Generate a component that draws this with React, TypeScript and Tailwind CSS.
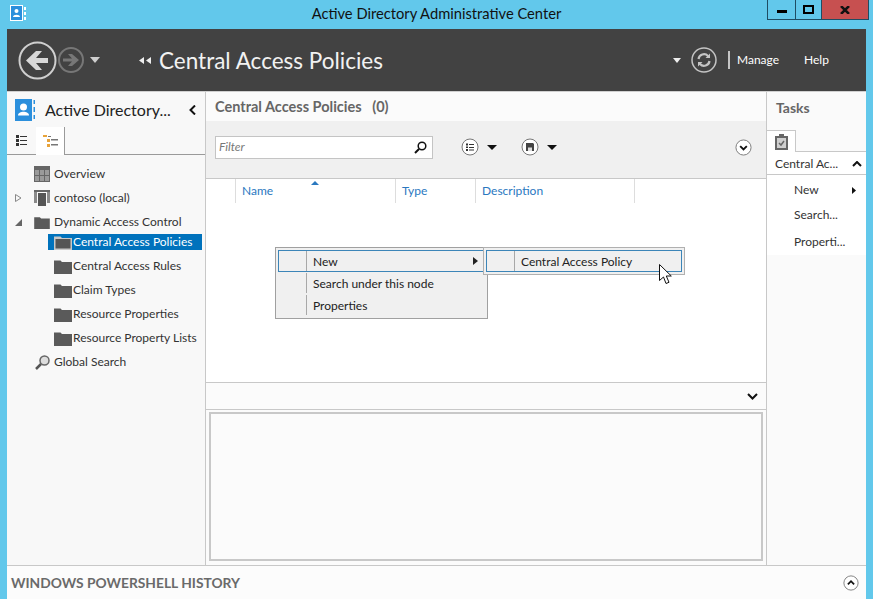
const FONT = "font-['Lato','Open_Sans',sans-serif]";

function FolderIcon({ open = false, small = false }: { open?: boolean; small?: boolean }) {
  return (
    <svg width={small ? 16 : 18} height={small ? 13 : 15} viewBox="0 0 18 15" className="shrink-0">
      <path d="M0 3V1.500h6.500L8 3h10v12H0z" fill={open ? "#c8c8c8" : "#5a5a5a"} />
      {open && <rect x="1.500" y="4" width="15" height="9.500" fill="#555" />}
    </svg>
  );
}

function TreeRow({
  label,
  icon,
  expander,
}: {
  label: string;
  icon: React.ReactNode;
  expander?: React.ReactNode;
}) {
  return (
    <div className="flex h-6 items-center pl-[7px] text-[12px] text-[#333]">
      <div className="flex w-[8px] items-center justify-center">{expander}</div>
      <div className="ml-[10px] flex w-[20px] justify-center">{icon}</div>
      <span className="ml-[2px]">{label}</span>
    </div>
  );
}

function SubRow({ label, selected = false }: { label: string; selected?: boolean }) {
  return (
    <div className={`flex h-6 items-center pl-[41px] text-[12px] text-[#333] ${selected ? "-mt-[4px]" : ""}`}>
      <div
        className={`flex h-4 w-[154px] items-center pl-[6px] ${selected ? "bg-[#0072bc] text-white" : ""}`}
      >
        <FolderIcon open={selected} />
        <span className="ml-[1px] whitespace-nowrap">{label}</span>
      </div>
    </div>
  );
}

function CircleBtn({ children, size = 18 }: { children: React.ReactNode; size?: number }) {
  return (
    <svg width={size} height={size} viewBox="0 0 18 18" className="shrink-0">
      <circle cx="9" cy="9" r="8" fill="#fff" stroke="#777" strokeWidth="1" />
      {children}
    </svg>
  );
}

function MenuRow({ label, hover = false, arrow = false }: { label: string; hover?: boolean; arrow?: boolean }) {
  return (
    <div
      className={`flex h-[22px] items-stretch text-[12px] text-[#222] ${
        hover ? "border border-[#3c85b8]" : "border border-transparent"
      }`}
    >
      <div className="w-[28px] border-r border-[#a8a8a8]" />
      <span className="flex flex-1 items-center pl-[6px] pt-[1px]">{label}</span>
      {arrow && (
        <svg width="5" height="8" viewBox="0 0 5 8" className="mr-[6px] self-center">
          <path d="M0 0l5 4-5 4z" fill="#222" />
        </svg>
      )}
    </div>
  );
}

export default function App() {
  return (
    <div className={`relative flex h-[599px] w-[873px] flex-col overflow-hidden bg-[#62c8eb] ${FONT}`}>
      {/* Title bar */}
      <div className="relative flex h-[29px] shrink-0 items-center justify-center text-[14.7px] text-[#111]">
        <svg width="16" height="16" viewBox="0 0 16 16" className="absolute left-[10px] top-[5px]">
          <rect x="0.500" y="0.500" width="12" height="15" fill="#2b8fdc" stroke="#fff" />
          <circle cx="6.500" cy="6" r="2" fill="#fff" />
          <path d="M3 12c0-3 7-3 7 0z" fill="#fff" />
          <path d="M14 2h2v3h-2zM14 7h2v3h-2zM14 12h2v3h-2z" fill="#fff" />
        </svg>
        <span className="-mt-[2px]">Active Directory Administrative Center</span>
        <div className="absolute left-[767px] top-0 flex h-[20px] border border-t-0 border-[#1f4d63]">
          <div className="flex w-[28px] items-center justify-center border-r border-[#1f4d63]">
            <div className="mt-[3px] h-[3px] w-[10px] bg-black" />
          </div>
          <div className="flex w-[26px] items-center justify-center border-r border-[#1f4d63]">
            <div className="h-[9px] w-[11px] border-2 border-black" />
          </div>
          <div className="flex w-[46px] items-center justify-center bg-[#c75050]">
            <svg width="10" height="8" viewBox="0 0 10 8">
              <path d="M1 0l8 8M9 0L1 8" stroke="#111" strokeWidth="2.500" fill="none" />
            </svg>
          </div>
        </div>
      </div>

      <div className="ml-[7px] flex w-[859px] flex-1 flex-col overflow-hidden">
        {/* Dark header */}
        <div className="flex h-[63px] shrink-0 items-center border-b border-[#d0d0d0] bg-[#424242] pl-[11px] text-white">
          <svg width="39" height="39" viewBox="0 0 39 39" className="shrink-0">
            <circle cx="19.500" cy="19.500" r="18" fill="none" stroke="#cfcfcf" strokeWidth="2" />
            <path d="M30 17v5H18l6 7h-6l-10-9.500L18 10h6l-6 7z" fill="#d8d8d8" />
          </svg>
          <svg width="26" height="26" viewBox="0 0 26 26" className="ml-[1px] shrink-0">
            <circle cx="13" cy="13" r="12" fill="none" stroke="#777" strokeWidth="2" />
            <path d="M5 11.500v3h9l-4 4.500h4l7-6-7-6h-4l4 4.500z" fill="#777" />
          </svg>
          <svg width="10" height="6" viewBox="0 0 10 6" className="ml-[6px] shrink-0">
            <path d="M0 0h10L5 6z" fill="#cfcfcf" />
          </svg>
          <svg width="13" height="7" viewBox="0 0 13 7" className="ml-[39px] shrink-0">
            <path d="M5 0v7L0 3.500zM12 0v7L7 3.500z" fill="#eee" />
          </svg>
          <span className="ml-[7px] mt-[2px] whitespace-nowrap text-[22.5px] leading-none text-[#f2f2f2]">Central Access Policies</span>
          <div className="flex-1" />
          <svg width="8" height="5" viewBox="0 0 8 5" className="shrink-0">
            <path d="M0 0h8L4 5z" fill="#eee" />
          </svg>
          <svg width="26" height="26" viewBox="0 0 26 26" className="ml-[10px] shrink-0">
            <circle cx="13" cy="13" r="12" fill="none" stroke="#c4c4c4" strokeWidth="1.500" />
            <path d="M7.500 12a5.500 5.500 0 0 1 9.500-3l1 1M18.500 14a5.500 5.500 0 0 1-9.500 3l-1-1" fill="none" stroke="#c4c4c4" strokeWidth="2.200" />
            <path d="M19 6.500V11h-4.500zM7 19.500V15h4.500z" fill="#c4c4c4" />
          </svg>
          <div className="ml-[11px] h-[18px] w-[2px] bg-[#c4c4c4]" />
          <span className="ml-[7px] w-[43px] whitespace-nowrap text-[12px]">Manage</span>
          <span className="ml-[24px] mr-[37px] w-[25px] text-[12px]">Help</span>
        </div>

        <div className="flex min-h-0 flex-1">
          {/* Left nav */}
          <div className="flex w-[199px] shrink-0 flex-col border-r border-[#c8c8c8] bg-[#f8f8f8]">
            <div className="flex h-[35px] shrink-0 items-center pl-[8px]">
              <svg width="20" height="22" viewBox="0 0 20 22" className="shrink-0">
                <rect x="0" y="0" width="17" height="22" fill="#2b8fdc" />
                <circle cx="8.500" cy="8" r="3.500" fill="#fff" />
                <path d="M3 16.500c0-5 11-5 11 0z" fill="#fff" />
                <path d="M18.500 1h1.500v4h-1.500zM18.500 8h1.500v5h-1.500zM18.500 16h1.500v4h-1.500z" fill="#2b8fdc" />
              </svg>
              <span className="ml-[10px] w-[123px] whitespace-nowrap text-[16px] text-[#222]">Active Directory...</span>
              <svg width="7" height="10" viewBox="0 0 7 10" className="ml-[21px] shrink-0">
                <path d="M6 0.500L1.500 5 6 9.500" fill="none" stroke="#111" strokeWidth="2" />
              </svg>
            </div>
            <div className="flex h-[28px] shrink-0 items-stretch border-b border-[#9a9a9a]">
              <div className="flex w-[29px] items-center justify-center">
                <svg width="11" height="11" viewBox="0 0 11 11">
                  <path d="M0 0h3v3H0zM0 4h3v3H0zM0 8h3v3H0zM4 1h7v1H4zM4 5h7v1H4zM4 9h7v1H4z" fill="#333" />
                </svg>
              </div>
              <div className="-mb-px flex w-[29px] items-center justify-center border-r border-[#9a9a9a] bg-white">
                <svg width="15" height="12" viewBox="0 0 15 12">
                  <path d="M0 0h4v2H0zM4 4h3v3H4zM4 9h3v3H4z" fill="#e8a33a" />
                  <path d="M8 4h7v1.500H8zM8 9h7v1.500H8zM5 1h3v1H5z" fill="#777" />
                </svg>
              </div>
            </div>
            <div className="pt-[7px]">
              <TreeRow
                label="Overview"
                icon={
                  <svg width="16" height="16" viewBox="0 0 16 16">
                    <path d="M0 0h16v16H0z" fill="#666" />
                    <path d="M1 4h4v5H1zM6 4h4v5H6zM11 4h4v5h-4zM1 10h4v5H1zM6 10h4v5H6zM11 10h4v5h-4z" fill="#9a9a9a" />
                  </svg>
                }
              />
              <TreeRow
                label="contoso (local)"
                expander={
                  <svg width="7" height="8" viewBox="0 0 7 8">
                    <path d="M0.500 0.500L6 4 0.500 7.500z" fill="none" stroke="#888" />
                  </svg>
                }
                icon={
                  <svg width="16" height="16" viewBox="0 0 16 16">
                    <path d="M0 1h3v12H0zM13 1h3v12h-3z" fill="#8a8a8a" />
                    <path d="M0 0h16v2H0z" fill="#666" />
                    <rect x="4" y="3" width="8" height="13" fill="#555" />
                  </svg>
                }
              />
              <TreeRow
                label="Dynamic Access Control"
                expander={
                  <svg width="7" height="7" viewBox="0 0 7 7">
                    <path d="M7 0v7H0z" fill="#666" />
                  </svg>
                }
                icon={<FolderIcon small />}
              />
              <SubRow label="Central Access Policies" selected />
              <SubRow label="Central Access Rules" />
              <SubRow label="Claim Types" />
              <SubRow label="Resource Properties" />
              <SubRow label="Resource Property Lists" />
              <TreeRow
                label="Global Search"
                icon={
                  <svg width="15" height="15" viewBox="0 0 15 15">
                    <circle cx="9.500" cy="5.500" r="4.500" fill="#ddd" stroke="#666" strokeWidth="1.500" />
                    <path d="M6 9l-5 5" stroke="#555" strokeWidth="2.500" />
                  </svg>
                }
              />
            </div>
          </div>

          {/* Center */}
          <div className="flex min-w-0 flex-1 flex-col bg-white">
            <div className="flex h-[29px] shrink-0 items-center bg-[#fbfbfb] pl-[9px] text-[14.500px] font-bold text-[#666]">
              <span className="whitespace-pre">Central Access Policies   (0)</span>
            </div>
            <div className="flex h-[58px] shrink-0 items-center border-b border-[#c8c8c8] bg-[#f0f0f0] pb-[5px] pl-[9px] pr-[14px]">
              <div className="flex h-[23px] w-[218px] items-center justify-between border border-[#c4c4c4] bg-white pl-[3px] pr-[5px]">
                <span className="text-[12px] italic text-[#777]">Filter</span>
                <svg width="13" height="13" viewBox="0 0 13 13">
                  <circle cx="8" cy="5" r="3.800" fill="none" stroke="#111" strokeWidth="1.500" />
                  <path d="M5 8l-4 4" stroke="#111" strokeWidth="2" />
                </svg>
              </div>
              <div className="ml-[28px]">
                <CircleBtn>
                  <path d="M5 5.500h2v2H5zM5 8.500h2v1.500H5zM5 11h2v2H5zM8 6h5v1H8zM8 9h5v1H8zM8 11.500h5v1H8z" fill="#333" />
                </CircleBtn>
              </div>
              <svg width="10" height="5" viewBox="0 0 10 5" className="ml-[8px]">
                <path d="M0 0h10L5 5z" fill="#111" />
              </svg>
              <div className="ml-[24px]">
                <CircleBtn>
                  <path d="M5 5h7l1 1v7H5z" fill="#444" />
                  <path d="M7 9.500h4V13H7z" fill="#ddd" />
                </CircleBtn>
              </div>
              <svg width="10" height="5" viewBox="0 0 10 5" className="ml-[8px]">
                <path d="M0 0h10L5 5z" fill="#111" />
              </svg>
              <div className="flex-1" />
              <CircleBtn size={17}>
                <path d="M5.500 7.500L9 11l3.500-3.500" fill="none" stroke="#111" strokeWidth="2" />
              </CircleBtn>
            </div>
            <div className="flex h-[204px] shrink-0 items-start border-b border-[#c8c8c8] bg-white text-[12px] text-[#2a78bf]">
              <div className="h-[24px] w-[30px] border-r border-[#ddd]" />
              <div className="relative h-[24px] w-[160px] border-r border-[#ddd] pl-[6px] pt-[3px]">
                Name
                <svg width="8" height="4" viewBox="0 0 8 4" className="absolute left-[75px] top-[2px]">
                  <path d="M0 4L4 0l4 4z" fill="#2a78bf" />
                </svg>
              </div>
              <div className="h-[24px] w-[80px] border-r border-[#ddd] pl-[6px] pt-[3px]">Type</div>
              <div className="h-[24px] w-[159px] border-r border-[#ddd] pl-[6px] pt-[3px]">Description</div>
            </div>
            <div className="flex h-[27px] shrink-0 items-center justify-end border-b border-[#c8c8c8] bg-[#fbfbfb] pr-[8px]">
              <svg width="11" height="7" viewBox="0 0 11 7">
                <path d="M1 1l4.500 4.500L10 1" fill="none" stroke="#111" strokeWidth="2" />
              </svg>
            </div>
            <div className="flex flex-1 bg-[#fbfbfb] px-[3px] pb-[4px] pt-[2px]">
              <div className="flex-1 border-2 border-[#c8c8c8]" />
            </div>
          </div>

          {/* Tasks */}
          <div className="flex w-[100px] shrink-0 flex-col border-l border-[#c8c8c8] bg-[#fafafa]">
            <div className="flex h-[38px] shrink-0 items-center pb-[8px] pl-[9px] text-[14px] font-bold text-[#666]">Tasks</div>
            <div className="flex h-[22px] shrink-0 items-stretch border-b border-[#c8c8c8]">
              <div className="-mb-px flex w-[29px] items-center justify-center border-r border-t border-[#c8c8c8] bg-white">
                <svg width="13" height="16" viewBox="0 0 13 16">
                  <path d="M0 2h4V0h5v2h4v14H0z" fill="#666" />
                  <path d="M2 4h9v10H2z" fill="#cfcfcf" />
                  <path d="M4 9l2 2 3-4" fill="none" stroke="#666" strokeWidth="1.500" />
                </svg>
              </div>
            </div>
            <div className="flex h-[23px] shrink-0 items-center justify-between border-b border-[#c8c8c8] bg-white pl-[8px] pr-[4px] pt-[1px] text-[12px] text-[#333]">
              <span className="whitespace-nowrap">Central Ac...</span>
              <svg width="10" height="6" viewBox="0 0 10 6">
                <path d="M1 5l4-4 4 4" fill="none" stroke="#111" strokeWidth="2" />
              </svg>
            </div>
            <div className="bg-white pb-[3px] pl-[27px] text-[12px] text-[#333]">
              <div className="flex h-[25px] items-center justify-between pr-[10px] pt-[5px]">
                <span>New</span>
                <svg width="4" height="7" viewBox="0 0 4 7">
                  <path d="M0 0l4 3.500L0 7z" fill="#111" />
                </svg>
              </div>
              <div className="flex h-[25px] items-center pt-[5px]">Search...</div>
              <div className="flex h-[27px] items-center whitespace-nowrap pt-[7px]">Properti...</div>
            </div>
          </div>
        </div>

        {/* PowerShell history */}
        <div className="flex h-[34px] shrink-0 items-center justify-between border-t border-[#c8c8c8] bg-[#fcfcfc] pl-[4px] pr-[7px]">
          <span className="pt-[2px] text-[13.800px] font-bold text-[#6a6a6a]">WINDOWS POWERSHELL HISTORY</span>
          <CircleBtn size={16}>
            <path d="M5.500 10.500L9 7l3.500 3.500" fill="none" stroke="#111" strokeWidth="2" />
          </CircleBtn>
        </div>
      </div>

      {/* Context menu */}
      <div className="absolute left-[275px] top-[247px] w-[213px] border border-[#a0a0a0] bg-[#f0f0f0] p-[2px]">
        <MenuRow label="New" hover arrow />
        <MenuRow label="Search under this node" />
        <MenuRow label="Properties" />
      </div>
      <div className="absolute left-[483px] top-[247px] w-[202px] border border-[#b0b0b0] bg-[#f0f0f0] p-[2px]">
        <MenuRow label="Central Access Policy" hover />
      </div>
      <svg width="13" height="21" viewBox="0 0 13 21" className="absolute left-[659px] top-[264px]">
        <path d="M0.500 0.500v16l4-3.500 2.500 6.500 3-1.200-2.700-6.300h5z" fill="#fff" stroke="#111" />
      </svg>
    </div>
  );
}
